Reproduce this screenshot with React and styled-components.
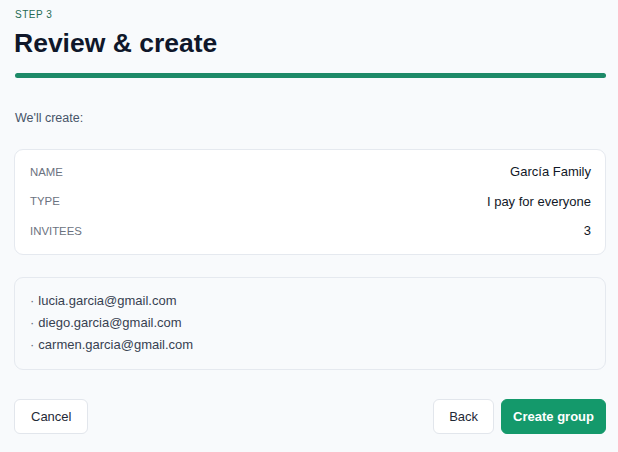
import React from "react";
import styled, { createGlobalStyle } from "styled-components";

const Global = createGlobalStyle`
  html, body {
    margin: 0;
    background: #f8fafc;
  }
  body {
    font-family: "Liberation Sans", Arial, sans-serif;
    color: #0f172a;
  }
`;

const Page = styled.div`
  width: 618px;
  height: 452px;
  box-sizing: border-box;
  padding: 9px 12px 0 14px;
  display: flex;
  flex-direction: column;
`;

const Step = styled.div`
  font-size: 10px;
  letter-spacing: 0.5px;
  color: #246b55;
  text-transform: uppercase;
  padding-left: 1px;
`;

const Title = styled.h1`
  margin: 7px 0 0;
  font-size: 26.5px;
  font-weight: 700;
  color: #0f172a;
  line-height: 32px;
`;

const Progress = styled.div`
  height: 5px;
  margin: 14px 0 0 1px;
  border-radius: 3px;
  background: #1d8a68;
`;

const Intro = styled.p`
  margin: 33px 0 0 1px;
  font-size: 12.5px;
  color: #475569;
`;

const Card = styled.div`
  margin-top: ${(p) => p.$top}px;
  border: 1px solid #e5e9ef;
  border-radius: 9px;
  background: ${(p) => (p.$muted ? "#f8fafc" : "#ffffff")};
  padding: ${(p) => p.$pad};
`;

const Row = styled.div`
  height: 29.5px;
  display: flex;
  align-items: center;
  justify-content: space-between;
`;

const Label = styled.span`
  font-size: 11.4px;
  color: #6b7280;
  text-transform: uppercase;
`;

const Value = styled.span`
  font-size: 13px;
  color: #111827;
`;

const Email = styled.div`
  height: 22px;
  display: flex;
  align-items: center;
  font-size: 13px;
  color: #374151;

  &::before {
    content: "·";
    margin-right: 4px;
    color: #6b7280;
  }
`;

const Footer = styled.div`
  margin-top: 29px;
  display: flex;
  align-items: center;
  gap: 7px;
`;

const Spacer = styled.div`
  flex: 1;
`;

const Button = styled.button`
  height: 35px;
  padding: 0 ${(p) => p.$px}px;
  border-radius: 6px;
  font-family: inherit;
  font-size: 13px;
  cursor: pointer;
  border: 1px solid ${(p) => (p.$primary ? "#14996b" : "#e2e6ec")};
  background: ${(p) => (p.$primary ? "#14996b" : "#ffffff")};
  color: ${(p) => (p.$primary ? "#ffffff" : "#1f2937")};
  font-weight: ${(p) => (p.$primary ? 700 : 400)};
`;

const details = [
  ["Name", "García Family"],
  ["Type", "I pay for everyone"],
  ["Invitees", "3"],
];

const invitees = [
  "lucia.garcia@gmail.com",
  "diego.garcia@gmail.com",
  "carmen.garcia@gmail.com",
];

export default function App() {
  return (
    <>
      <Global />
      <Page>
        <Step>Step 3</Step>
        <Title>Review &amp; create</Title>
        <Progress />
        <Intro>We'll create:</Intro>
        <Card $top={24} $pad="7px 14px 8px 15px">
          {details.map(([k, v]) => (
            <Row key={k}>
              <Label>{k}</Label>
              <Value>{v}</Value>
            </Row>
          ))}
        </Card>
        <Card $top={22} $muted $pad="12px 15px 13px">
          {invitees.map((e) => (
            <Email key={e}>{e}</Email>
          ))}
        </Card>
        <Footer>
          <Button $px={16}>Cancel</Button>
          <Spacer />
          <Button $px={15}>Back</Button>
          <Button $px={11} $primary>
            Create group
          </Button>
        </Footer>
      </Page>
    </>
  );
}
